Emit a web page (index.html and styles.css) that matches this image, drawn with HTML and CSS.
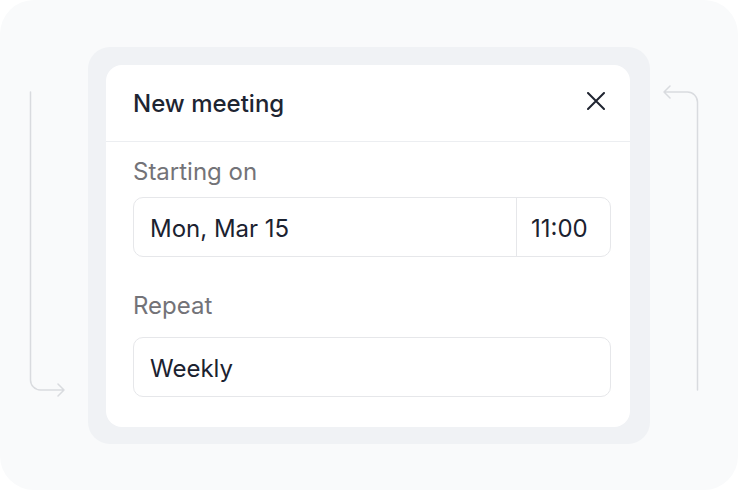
FILE: index.html
```html
<!DOCTYPE html>
<html lang="en">
<head>
<meta charset="utf-8">
<title>New meeting</title>
<link rel="stylesheet" href="styles.css">
</head>
<body>
<div class="canvas">
  <svg class="arrows" width="738" height="490" viewBox="0 0 738 490" aria-hidden="true">
    <path d="M30.5 92 V380 a10 10 0 0 0 10 10 H64 M58 384 L64 390 L58 396" fill="none" stroke="#d9dbdf" stroke-width="1.5" stroke-linecap="round" stroke-linejoin="round"/>
    <path d="M697.5 390 V102 a10 10 0 0 0 -10 -10 H664 M670 86 L664 92 L670 98" fill="none" stroke="#d9dbdf" stroke-width="1.5" stroke-linecap="round" stroke-linejoin="round"/>
  </svg>
  <div class="frame">
    <div class="card">
      <div class="card-header">
        <span class="title">New meeting</span>
        <svg class="close" width="18" height="18" viewBox="0 0 18 18" aria-hidden="true">
          <path d="M1 1 L17 17 M17 1 L1 17" stroke="#1f2430" stroke-width="2" stroke-linecap="round"/>
        </svg>
      </div>
      <div class="card-body">
        <div class="label first">Starting on</div>
        <div class="field split">
          <div class="date">Mon, Mar 15</div>
          <div class="time">11:00</div>
        </div>
        <div class="label second">Repeat</div>
        <div class="field">
          <div class="date">Weekly</div>
        </div>
      </div>
    </div>
  </div>
</div>
</body>
</html>
```

FILE: styles.css
```css
* { box-sizing: border-box; }
html, body { margin: 0; padding: 0; background: #ffffff; }
body {
  width: 738px;
  height: 490px;
  font-family: Inter, "Noto Sans", sans-serif;
  overflow: hidden;
}
.canvas {
  position: relative;
  width: 738px;
  height: 490px;
  border-radius: 34px;
  background: #f9fafb;
  display: flex;
  align-items: center;
  justify-content: center;
}
.arrows {
  position: absolute;
  left: 0;
  top: 0;
}
.frame {
  width: 562px;
  height: 397px;
  border-radius: 22px;
  background: #f0f2f5;
  padding: 18px 20px 17px 18px;
}
.card {
  width: 100%;
  height: 100%;
  background: #ffffff;
  border-radius: 16px;
  display: flex;
  flex-direction: column;
}
.card-header {
  height: 77px;
  border-bottom: 1.5px solid #eceef1;
  display: flex;
  align-items: center;
  justify-content: space-between;
  padding: 0 25px 0 27px;
}
.title {
  font-size: 24px;
  line-height: 28px;
  font-weight: 500;
  color: #1e2532;
  padding-top: 3px;
}
.close { display: block; margin-bottom: 4px; }
.card-body {
  padding: 0 19px 0 27px;
  display: flex;
  flex-direction: column;
}
.label {
  font-size: 24px;
  line-height: 28px;
  color: #737378;
}
.label.first { margin-top: 16px; margin-bottom: 11px; }
.label.second { margin-top: 35px; margin-bottom: 17px; }
.field {
  height: 60px;
  border: 1.5px solid #e6e7ea;
  border-radius: 10px;
  display: flex;
  align-items: center;
  font-size: 24px;
  color: #1b2230;
}
.date {
  flex: 1;
  padding-left: 16px;
  padding-top: 3px;
}
.time {
  width: 94px;
  height: 100%;
  border-left: 1.5px solid #e6e7ea;
  display: flex;
  align-items: center;
  padding-left: 14px;
  padding-top: 3px;
}
```
